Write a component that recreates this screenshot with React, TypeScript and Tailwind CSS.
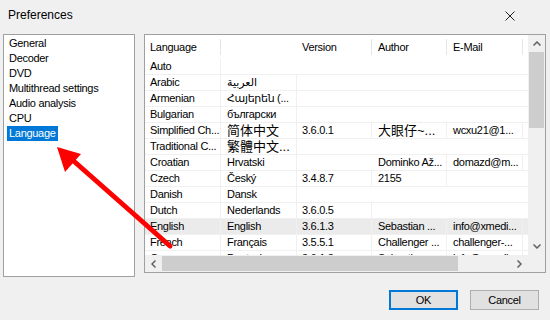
import React from 'react';

const rows: string[][] = [
  ['Auto', '', '', '', ''],
  ['Arabic', 'العربية', '', '', ''],
  ['Armenian', 'Հայերեն (...', '', '', ''],
  ['Bulgarian', 'български', '', '', ''],
  ['Simplified Ch...', '简体中文', '3.6.0.1', '大眼仔~...', 'wcxu21@1...'],
  ['Traditional C...', '繁體中文...', '', '', ''],
  ['Croatian', 'Hrvatski', '', 'Dominko Až...', 'domazd@m...'],
  ['Czech', 'Český', '3.4.8.7', '2155', ''],
  ['Danish', 'Dansk', '', '', ''],
  ['Dutch', 'Nederlands', '3.6.0.5', '', ''],
  ['English', 'English', '3.6.1.3', 'Sebastian ...', 'info@xmedi...'],
  ['French', 'Français', '3.5.5.1', 'Challenger ...', 'challenger-...'],
  ['German', 'Deutsch', '3.6.1.3', 'Sebastian ...', 'info@xmedi...'],
];

const pages = ['General', 'Decoder', 'DVD', 'Multithread settings', 'Audio analysis', 'CPU', 'Language'];

const colW = ['w-[76px]', 'w-[76px]', 'w-[75px]', 'w-[75px]', 'w-[76px]'];
const padX = ['pl-[5px]', 'pl-[6px]', 'pl-[5px]', 'pl-[6px]', 'pl-[6px]'];

const isCjk = (s: string) => /[\u4e00-\u9fff]/.test(s);

function Cells({ cells, header }: { cells: string[]; header?: boolean }) {
  return (
    <>
      {cells.map((c, i) => (
        <div
          key={i}
          className={`${colW[i]} ${padX[i]} shrink-0 overflow-hidden whitespace-nowrap border-r ${
            header ? 'border-[#e5e5e5]' : 'border-[#f0f0f0]'
          } ${isCjk(c) ? 'text-[13px] tracking-normal' : ''}`}
        >
          {c}
        </div>
      ))}
      <div className="flex-1" />
    </>
  );
}

export default function App() {
  return (
    <div
      className="relative w-[550px] h-[320px] overflow-hidden bg-[#f0f0f0] text-[11px] tracking-[-0.3px] text-black"
      style={{ fontFamily: '"Liberation Sans", "DejaVu Sans", "Noto Sans CJK SC", sans-serif' }}
    >
      {/* title bar */}
      <div className="flex items-center h-[30px] pl-[8px] pr-[35px]">
        <span className="flex-1 leading-none text-[12px] tracking-normal">Preferences</span>
        <svg width="10" height="10" viewBox="0 0 10 10" className="mt-[1px]">
          <path d="M0.5 0.5L9.5 9.5M9.5 0.5L0.5 9.5" stroke="#222" strokeWidth="1" />
        </svg>
      </div>

      {/* body */}
      <div className="flex items-start pl-[3px] pt-[4px]">
        {/* page list */}
        <div className="w-[132px] h-[243px] bg-white border border-[#a0a0a0] pt-[1px] shrink-0">
          {pages.map((p) => (
            <div key={p} className="h-[15px] flex items-center pl-[3px]">
              <span
                className={`px-[2px] h-[15px] leading-[15px] ${
                  p === 'Language' ? 'bg-[#0078d7] text-white' : ''
                }`}
              >
                {p}
              </span>
            </div>
          ))}
        </div>

        {/* language table */}
        <div className="ml-[9px] w-[402px] h-[239px] bg-white border border-[#a0a0a0] flex flex-col">
          <div className="flex flex-1 min-h-0">
            <div className="flex-1 flex flex-col overflow-hidden">
              <div className="flex h-[24px] items-center shrink-0">
                <Cells cells={['Language', '', 'Version', 'Author', 'E-Mail']} header />
              </div>
              {rows.map((r, idx) => (
                <div
                  key={idx}
                  className={`flex h-[16px] shrink-0 items-center leading-[15px] border-b border-[#f0f0f0] ${
                    r[0] === 'English' ? 'bg-[#ebebeb]' : ''
                  }`}
                >
                  <Cells cells={r} />
                </div>
              ))}
            </div>
            {/* vertical scrollbar */}
            <div className="w-[17px] bg-[#f0f0f0] flex flex-col shrink-0">
              <div className="h-[17px] flex items-center justify-center">
                <svg width="8" height="5" viewBox="0 0 8 5">
                  <path d="M0.5 4.5L4 1L7.5 4.5" stroke="#606060" strokeWidth="1.5" fill="none" />
                </svg>
              </div>
              <div className="mx-[1px] h-[76px] bg-[#cdcdcd]" />
              <div className="flex-1" />
              <div className="h-[17px] flex items-center justify-center">
                <svg width="8" height="5" viewBox="0 0 8 5">
                  <path d="M0.5 0.5L4 4L7.5 0.5" stroke="#606060" strokeWidth="1.5" fill="none" />
                </svg>
              </div>
            </div>
          </div>
          {/* horizontal scrollbar */}
          <div className="h-[17px] flex shrink-0">
            <div className="flex-1 flex bg-[#f0f0f0]">
              <div className="w-[17px] flex items-center justify-center">
                <svg width="5" height="8" viewBox="0 0 5 8">
                  <path d="M4.5 0.5L1 4L4.5 7.5" stroke="#606060" strokeWidth="1.5" fill="none" />
                </svg>
              </div>
              <div className="my-[1px] w-[296px] bg-[#cdcdcd]" />
              <div className="flex-1" />
              <div className="w-[17px] flex items-center justify-center">
                <svg width="5" height="8" viewBox="0 0 5 8">
                  <path d="M0.5 0.5L4 4L0.5 7.5" stroke="#606060" strokeWidth="1.5" fill="none" />
                </svg>
              </div>
            </div>
            <div className="w-[17px] bg-[#f0f0f0]" />
          </div>
        </div>
      </div>

      {/* buttons */}
      <div className="flex justify-end gap-[12px] pr-[11px] pt-[13px]">
        <button className="w-[69px] h-[20px] bg-[#e1e1e1] border-2 border-[#0078d7] flex items-center justify-center leading-none">
          OK
        </button>
        <button className="w-[69px] h-[20px] bg-[#e1e1e1] border border-[#adadad] flex items-center justify-center leading-none">
          Cancel
        </button>
      </div>

      {/* annotation arrow */}
      <svg className="absolute left-0 top-0 pointer-events-none" width="550" height="320">
        <line x1="170" y1="246" x2="68" y2="156" stroke="#ff0000" strokeWidth="5" strokeLinecap="round" />
        <polygon points="57,147 81,154 65,172" fill="#ff0000" />
      </svg>
    </div>
  );
}
